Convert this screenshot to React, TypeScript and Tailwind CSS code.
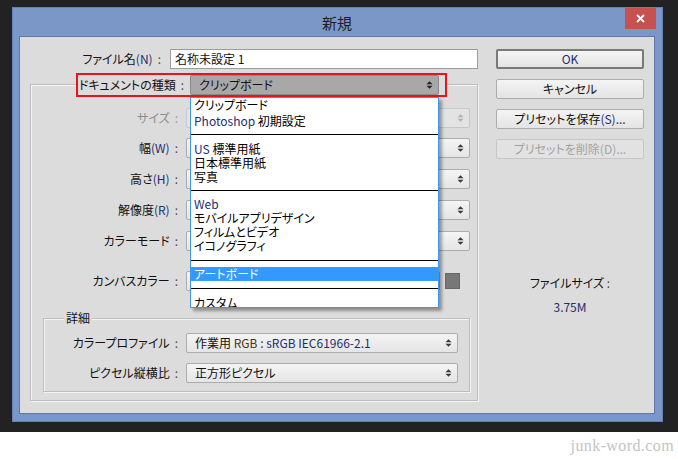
import React from "react";

const L = ({ children }: { children: React.ReactNode }) => (
  <span className="text-[#1f2d6e]">{children}</span>
);

function UpDown({ color = "#333" }: { color?: string }) {
  return (
    <svg width="7" height="10" viewBox="0 0 7 10" className="shrink-0">
      <path d="M0.5 4.2L3.5 1.2L6.5 4.2Z" fill={color} />
      <path d="M0.5 5.8L3.5 8.8L6.5 5.8Z" fill={color} />
    </svg>
  );
}

function Colon({ disabled }: { disabled?: boolean }) {
  return (
    <span className={`ml-[5px] ${disabled ? "text-[#9a9a9a]" : "text-[#5a4a3c]"}`}>:</span>
  );
}

function Field({
  className,
  children,
  disabled,
}: {
  className: string;
  children?: React.ReactNode;
  disabled?: boolean;
}) {
  return (
    <div
      className={`flex h-[20px] items-center justify-between rounded-[2px] border pl-[8px] pr-[5px] ${
        disabled
          ? "border-[#c8c8c8] bg-[#e3e3e3]"
          : "border-[#acacac] bg-gradient-to-b from-[#f4f4f4] to-[#e5e5e5]"
      } ${className}`}
    >
      <span className="whitespace-nowrap">{children}</span>
      <UpDown color={disabled ? "#b0b0b0" : "#3a3a3a"} />
    </div>
  );
}

function Row({
  label,
  labelW,
  disabled,
  children,
  className,
}: {
  label: React.ReactNode;
  labelW: string;
  disabled?: boolean;
  children: React.ReactNode;
  className: string;
}) {
  return (
    <div className={`flex items-center ${className}`}>
      <div
        className={`${labelW} flex items-center justify-end pr-[3px] ${
          disabled ? "text-[#8c8c8c]" : "text-[#111]"
        }`}
      >
        <span className="whitespace-nowrap">{label}</span>
        <Colon disabled={disabled} />
      </div>
      <div className="ml-[5px] flex items-center">{children}</div>
    </div>
  );
}

function Btn({
  children,
  ok,
  disabled,
  className = "",
}: {
  children: React.ReactNode;
  ok?: boolean;
  disabled?: boolean;
  className?: string;
}) {
  return (
    <div
      className={`flex h-[20px] w-[148px] items-center justify-center rounded-[2px] ${
        ok
          ? "border-2 border-[#7a7a7a]"
          : disabled
          ? "border border-[#c6c6c6]"
          : "border border-[#acacac]"
      } ${
        disabled
          ? "bg-[#e2e2e2] text-[#a2a2a2]"
          : "bg-gradient-to-b from-[#f4f4f4] to-[#e4e4e4] text-[#111]"
      } ${className}`}
    >
      {children}
    </div>
  );
}

function Sep({ className }: { className: string }) {
  return <div className={`h-px bg-black ${className}`} />;
}

function Item({ children }: { children: React.ReactNode }) {
  return <div className="h-[14px] whitespace-nowrap pl-[3px] leading-[14px]">{children}</div>;
}

function Dropdown() {
  return (
    <div className="absolute left-[-1px] top-[21px] z-10 h-[211px] w-[249px] overflow-hidden border border-[#3e95ec] bg-white text-[12px] leading-[14px] text-black shadow-[3px_3px_3px_rgba(0,0,0,0.35)]">
      <Item>クリップボード</Item>
      <div className="h-[2px]" />
      <Item>
        <L>Photoshop</L> 初期設定
      </Item>
      <Sep className="mb-[7px] mt-[6px]" />
      <Item>
        <L>US</L> 標準用紙
      </Item>
      <Item>日本標準用紙</Item>
      <Item>写真</Item>
      <Sep className="my-[6px]" />
      <Item>
        <L>Web</L>
      </Item>
      <Item>モバイルアプリデザイン</Item>
      <Item>フィルムとビデオ</Item>
      <Item>イコノグラフィ</Item>
      <Sep className="mb-[6px] mt-[7px]" />
      <div className="h-[14px] whitespace-nowrap border border-dotted border-[#c9803a] bg-[#3399ff] pl-[2px] leading-[12px] text-white">
        アートボード
      </div>
      <Sep className="my-[7px]" />
      <Item>カスタム</Item>
    </div>
  );
}

export default function App() {
  return (
    <div className="flex h-[460px] w-[678px] flex-col font-['Noto_Sans_CJK_JP',sans-serif] text-[12px] leading-[14px] [font-feature-settings:'palt']">
      <div className="h-[432px] bg-[#222222] pl-[12px] pt-[7px]">
        <div className="flex h-[415px] w-[651px] flex-col border border-[#6680b4] bg-[#7b97c8] pb-[7px] pl-[6px] pr-[7px]">
          {/* title bar */}
          <div className="grid h-[28px] grid-cols-[1fr_auto_1fr] items-start">
            <div />
            <div className="pt-[6px] text-[15px] leading-[18px] text-[#1e1e1e] [font-feature-settings:normal]">
              新規
            </div>
            <div className="flex justify-end">
              <div className="mr-[-1px] flex h-[21px] w-[31px] items-center justify-center bg-[#c75050]">
                <svg width="9" height="9" viewBox="0 0 9 9">
                  <path d="M1 1L8 8M8 1L1 8" stroke="white" strokeWidth="1.8" />
                </svg>
              </div>
            </div>
          </div>
          {/* content */}
          <div className="flex flex-1 border border-[#5f78a8] bg-[#dcdcdc] pt-[12px] text-[#111]">
            {/* left column */}
            <div className="w-[458px]">
              <div className="flex items-center">
                <div className="flex w-[145px] items-center justify-end pr-[4px]">
                  <span>
                    ファイル名<L>(N)</L>
                  </span>
                  <Colon />
                </div>
                <div className="ml-[5px] flex h-[20px] w-[308px] items-center border border-[#9c9c9c] bg-white pl-[4px] text-[12px]">
                  名称未設定 1
                </div>
              </div>

              <div className="ml-[10px] mt-[15px] w-[448px] border border-[#bdbdbd] pb-[8px] shadow-[inset_1px_1px_0_#f4f4f4,1px_1px_0_#f4f4f4]">
                <div className="-mt-[12px] ml-[45px] flex h-[24px] w-[371px] items-center justify-end border-2 border-[#e8141c] bg-[#dcdcdc] pr-[6px]">
                  <span className="whitespace-nowrap">ドキュメントの種類</span>
                  <Colon />
                  <div className="relative ml-[6px] flex h-[20px] w-[249px] items-center justify-between rounded-[2px] border border-[#8a8a8a] bg-[#a8a8a8] pl-[8px] pr-[5px]">
                    <span>クリップボード</span>
                    <UpDown color="#222" />
                    <Dropdown />
                  </div>
                </div>

                <Row className="mt-[11px]" labelW="w-[150px]" label="サイズ" disabled>
                  <Field className="w-[284px]" disabled />
                </Row>
                <Row
                  className="mt-[10px]"
                  labelW="w-[150px]"
                  label={
                    <>
                      幅<L>(W)</L>
                    </>
                  }
                >
                  <Field className="w-[284px]" />
                </Row>
                <Row
                  className="mt-[11px]"
                  labelW="w-[150px]"
                  label={
                    <>
                      高さ<L>(H)</L>
                    </>
                  }
                >
                  <Field className="w-[284px]" />
                </Row>
                <Row
                  className="mt-[11px]"
                  labelW="w-[150px]"
                  label={
                    <>
                      解像度<L>(R)</L>
                    </>
                  }
                >
                  <Field className="w-[284px]" />
                </Row>
                <Row className="mt-[11px]" labelW="w-[150px]" label="カラーモード">
                  <Field className="w-[284px]" />
                </Row>
                <Row className="mt-[20px]" labelW="w-[150px]" label="カンバスカラー">
                  <Field className="w-[254px]" />
                  <div className="ml-[5px] h-[16px] w-[15px] border border-[#666] bg-[#777]" />
                </Row>

                <div className="ml-[12px] mt-[27px] w-[427px] border border-[#bdbdbd] pb-[8px] shadow-[inset_1px_1px_0_#f4f4f4,1px_1px_0_#f4f4f4]">
                  <div className="-mt-[8px] ml-[20px] w-fit bg-[#dcdcdc] px-[2px] leading-[14px]">
                    詳細
                  </div>
                  <Row className="mt-[8px]" labelW="w-[137px]" label="カラープロファイル">
                    <Field className="w-[272px]">
                      作業用 <span className="text-[#4a3410]">RGB :</span>{" "}
                      <L>sRGB IEC61966-2.1</L>
                    </Field>
                  </Row>
                  <Row className="mt-[10px]" labelW="w-[137px]" label="ピクセル縦横比">
                    <Field className="w-[272px]">正方形ピクセル</Field>
                  </Row>
                </div>
              </div>
            </div>

            {/* right column */}
            <div className="ml-[18px] flex w-[148px] flex-col">
              <Btn ok>
                <L>OK</L>
              </Btn>
              <Btn className="mt-[10px]">キャンセル</Btn>
              <Btn className="mt-[10px]">
                プリセットを保存<L>(S)...</L>
              </Btn>
              <Btn className="mt-[10px]" disabled>
                プリセットを削除(D)...
              </Btn>
              <div className="mt-[117px] text-center">
                ファイルサイズ <span className="text-[#5a4a3c]">:</span>
              </div>
              <div className="mt-[10px] text-center">
                <L>3.75M</L>
              </div>
            </div>
          </div>
        </div>
      </div>
      <div className="flex h-[28px] items-center justify-end bg-white pr-[4px]">
        <span className="font-['Liberation_Serif',serif] text-[16px] tracking-[0.4px] text-[#c4c4c4]">
          junk-word.com
        </span>
      </div>
    </div>
  );
}
